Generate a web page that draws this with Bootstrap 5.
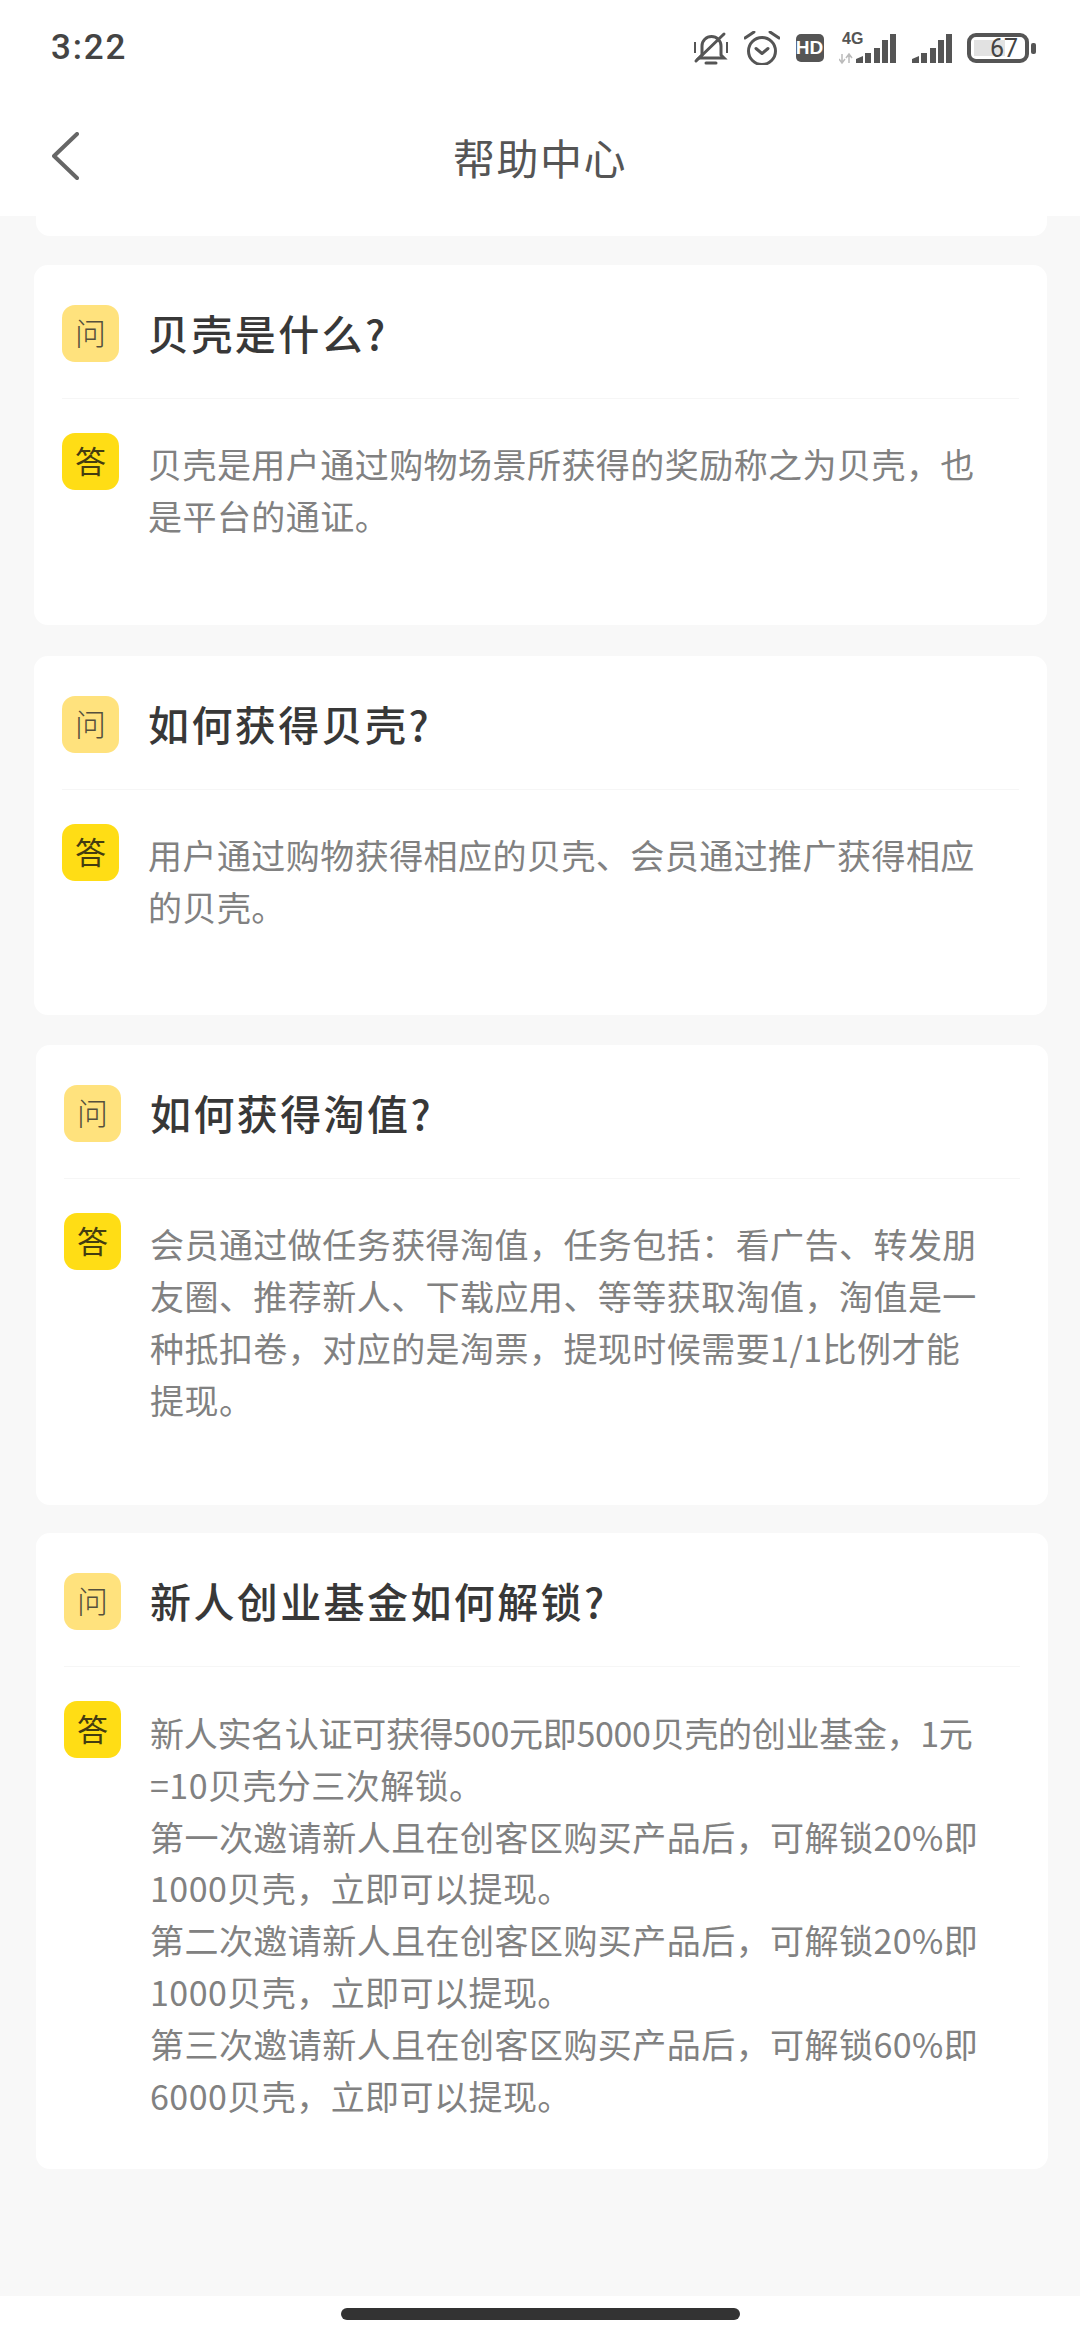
<!DOCTYPE html>
<html lang="zh">
<head>
    <meta charset="utf-8">
    <title>帮助中心</title>
    <link rel="stylesheet" href="https://cdn.jsdelivr.net/npm/bootstrap@5.3.2/dist/css/bootstrap.min.css">
    <style>
        html, body { height: 2340px; }
        body {
            background: #f8f8f8;
            font-family: "Noto Sans CJK SC", "Noto Sans", sans-serif;
        }
        .phone-top { height: 216px; }
        .status-row { height: 96px; padding: 0 44px 0 51px; }
        .clock-text { font-family: Roboto, sans-serif; font-weight: 500; font-size: 35px; letter-spacing: 1.8px; color: #444; }
        .status-icons { gap: 15.5px; }
        .hd-tag {
            width: 28px; height: 28px; border-radius: 5px; background: #555; color: #fff;
            font: bold 19px/28px "Liberation Sans", sans-serif; text-align: center;
        }
        .title-row { height: 120px; padding: 0 52px; }
        .title-row svg { width: 27px; height: 48px; }
        .title-spacer { width: 27px; }
        .page-title { font-size: 42px; letter-spacing: 1.5px; color: #555; }

        .prev-tail { height: 20px; margin: 0 33px 0 36px; border-radius: 0 0 14px 14px; }
        .qa-card { border: 0; border-radius: 14px; padding: 40px 28px 0; }
        .qa-1 { margin: 29px 33px 0 34px; height: 360px; }
        .qa-2 { margin: 31px 33px 0 34px; height: 359px; }
        .qa-3 { margin: 30px 32px 0 36px; height: 460px; }
        .qa-4 { margin: 28px 32px 0 36px; height: 636px; }
        .qa-head { gap: 29px; height: 57px; }
        .qa-tag {
            flex: 0 0 57px; width: 57px; height: 57px; border-radius: 13px;
            font-size: 31px; line-height: 54px; text-align: center;
        }
        .tag-ask { background: #ffe27d; color: #55503c; font-weight: 300; }
        .tag-answer { background: #ffdd15; color: #443c10; }
        .qa-title { font-size: 41px; line-height: 55px; font-weight: 500; letter-spacing: 2.4px; color: #383838; }
        .qa-rule { margin: 36px 8px 34px 8px; border: 0; border-top: 1px solid #f6f6f6; opacity: 1; }
        .qa-body { gap: 29px; }
        .qa-text { padding-top: 5px; font-size: 34px; line-height: 52px; letter-spacing: 0.45px; color: #818181; width: 838px; }
        .qa-4 .qa-text { padding-top: 6px; line-height: 51.800px; }
        .tight-line { letter-spacing: -0.3px; }

        .phone-bottom { height: 44px; }
        .home-pill { width: 399px; height: 12px; margin-top: 12px; border-radius: 6px; background: #333; }
    </style>
</head>
<body class="d-flex flex-column">

    <div class="phone-top bg-white">
        <div class="status-row d-flex justify-content-between align-items-center">
            <span class="clock-text">3:22</span>
            <div class="status-icons d-flex align-items-center">
                <svg width="36" height="34" viewBox="0 0 36 34" fill="none" stroke="#555" stroke-width="3">
                    <path d="M9 24V15a9.500 9.500 0 0 1 19 0v9l3 3H6z"/>
                    <path d="M13 32h10" stroke-linecap="round"/>
                    <path d="M2 11v11M34 11v11" stroke-width="2"/>
                    <path d="M3 30 31 3" stroke-linecap="round"/>
                </svg>
                <svg width="36" height="34" viewBox="0 0 36 34" fill="none" stroke="#555" stroke-width="3" stroke-linecap="round" stroke-linejoin="round">
                    <circle cx="18" cy="20" r="13.500"/>
                    <path d="M1 7 10 1M26 1l9 6"/>
                    <path d="M12 17.500l6 5 6-5"/>
                </svg>
                <div class="hd-tag">HD</div>
                <svg width="57" height="34" viewBox="0 0 57 34">
                    <text x="3" y="13" font-family="Liberation Sans, sans-serif" font-weight="700" font-size="16" fill="#555">4G</text>
                    <path d="M3 23v9M0 28l3 4 3-4M10 32v-9M7 27l3-4 3 4" fill="none" stroke="#bbb" stroke-width="1.500"/>
                    <path d="M17 32v-4l7-3v7zM26 32V22h6v10zM35 32V17h6v15zM43 32V9h6v23zM51 32V3h6v29z" fill="#555"/>
                </svg>
                <svg width="40" height="34" viewBox="0 0 40 34">
                    <path d="M0 32v-4l7-3v7zM9 32V22h6v10zM18 32V17h6v15zM26 32V9h6v23zM34 32V3h6v29z" fill="#555"/>
                </svg>
                <svg width="69" height="34" viewBox="0 0 69 34">
                    <rect x="2" y="4" width="58" height="26" rx="7" fill="#fff" stroke="#555" stroke-width="4"/>
                    <rect x="7" y="9" width="31" height="16" fill="#e2e2e2"/>
                    <text x="37" y="26" text-anchor="middle" font-family="Roboto, sans-serif" font-size="25" fill="#444">67</text>
                    <rect x="64" y="12" width="5" height="11" rx="2" fill="#555"/>
                </svg>
            </div>
        </div>
        <div class="title-row d-flex justify-content-between align-items-center">
            <svg viewBox="0 0 27 48" fill="none" stroke="#666" stroke-width="4" stroke-linecap="round" stroke-linejoin="round">
                <path d="M25 2 2 24l23 22"/>
            </svg>
            <div class="page-title">帮助中心</div>
            <div class="title-spacer"></div>
        </div>
    </div>
    <div class="prev-tail bg-white"></div>

    <div class="card qa-card qa-1">
        <div class="qa-head d-flex">
            <div class="qa-tag tag-ask">问</div>
            <div class="qa-title">贝壳是什么?</div>
        </div>
        <hr class="qa-rule">
        <div class="qa-body d-flex">
            <div class="qa-tag tag-answer">答</div>
            <div class="qa-text">贝壳是用户通过购物场景所获得的奖励称之为贝壳，也是平台的通证。</div>
        </div>
    </div>

    <div class="card qa-card qa-2">
        <div class="qa-head d-flex">
            <div class="qa-tag tag-ask">问</div>
            <div class="qa-title">如何获得贝壳?</div>
        </div>
        <hr class="qa-rule">
        <div class="qa-body d-flex">
            <div class="qa-tag tag-answer">答</div>
            <div class="qa-text">用户通过购物获得相应的贝壳、会员通过推广获得相应的贝壳。</div>
        </div>
    </div>

    <div class="card qa-card qa-3">
        <div class="qa-head d-flex">
            <div class="qa-tag tag-ask">问</div>
            <div class="qa-title">如何获得淘值?</div>
        </div>
        <hr class="qa-rule">
        <div class="qa-body d-flex">
            <div class="qa-tag tag-answer">答</div>
            <div class="qa-text">会员通过做任务获得淘值，任务包括：看广告、转发朋友圈、推荐新人、下载应用、等等获取淘值，淘值是一种抵扣卷，对应的是淘票，提现时候需要1/1比例才能提现。</div>
        </div>
    </div>

    <div class="card qa-card qa-4">
        <div class="qa-head d-flex">
            <div class="qa-tag tag-ask">问</div>
            <div class="qa-title">新人创业基金如何解锁?</div>
        </div>
        <hr class="qa-rule">
        <div class="qa-body d-flex">
            <div class="qa-tag tag-answer">答</div>
            <div class="qa-text"><span class="tight-line">新人实名认证可获得500元即5000贝壳的创业基金，1元</span>=10贝壳分三次解锁。<br>第一次邀请新人且在创客区购买产品后，可解锁20%即1000贝壳，立即可以提现。<br>第二次邀请新人且在创客区购买产品后，可解锁20%即1000贝壳，立即可以提现。<br>第三次邀请新人且在创客区购买产品后，可解锁60%即6000贝壳，立即可以提现。</div>
        </div>
    </div>

    <div class="phone-bottom bg-white mt-auto d-flex justify-content-center">
        <div class="home-pill"></div>
    </div>

    <script src="https://cdn.jsdelivr.net/npm/bootstrap@5.3.2/dist/js/bootstrap.bundle.min.js"></script>
</body>
</html>
